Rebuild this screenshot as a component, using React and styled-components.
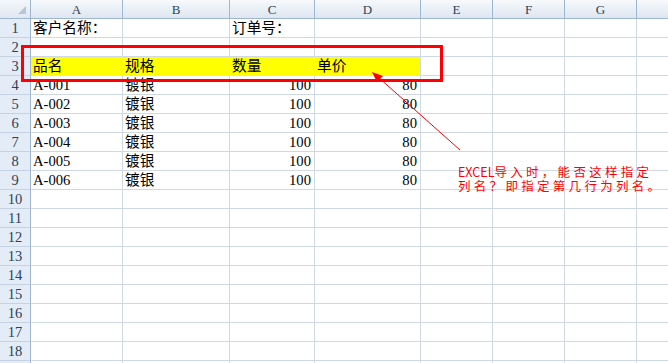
import React from "react";
import styled, { createGlobalStyle } from "styled-components";

const GlobalStyle = createGlobalStyle`
  html, body {
    margin: 0;
    padding: 0;
    background: #ffffff;
    overflow: hidden;
  }
  body {
    width: 668px;
    height: 363px;
  }
`;

const COLS = ["A", "B", "C", "D", "E", "F", "G", "H"];
const ROW_COUNT = 19;

const Page = styled.div`
  position: relative;
  width: 668px;
  height: 363px;
  overflow: hidden;
  font-family: "Liberation Serif", "Noto Sans CJK SC", serif;
`;

const Sheet = styled.div`
  display: grid;
  grid-template-columns: 31px 92px 107px 85px 106px 72px 72px 72px 72px;
  grid-template-rows: 19px;
  grid-auto-rows: 19px;
  width: max-content;
`;

const Corner = styled.div`
  position: relative;
  box-sizing: border-box;
  background: linear-gradient(#f4f7fb, #dfe7f2);
  border-right: 1px solid #9eb6ce;
  border-bottom: 1px solid #9eb6ce;

  &::after {
    content: "";
    position: absolute;
    right: 4px;
    bottom: 4px;
    width: 0;
    height: 0;
    border-left: 8px solid transparent;
    border-bottom: 8px solid #b6c6da;
  }
`;

const ColHeader = styled.div`
  box-sizing: border-box;
  display: flex;
  align-items: center;
  justify-content: center;
  background: linear-gradient(#f7f9fc, #dde6f1);
  border-right: 1px solid #9eb6ce;
  border-bottom: 1px solid #9eb6ce;
  color: #2c4254;
  font-size: 13px;
  padding-top: 1px;
`;

const RowHeader = styled.div`
  box-sizing: border-box;
  display: flex;
  align-items: center;
  justify-content: center;
  background: #e4ecf7;
  border-right: 1px solid #9eb6ce;
  border-bottom: 1px solid #c5d2e3;
  color: #2c4254;
  font-size: 14.5px;
  padding-top: 1px;
  overflow: hidden;
`;

const Cell = styled.div`
  box-sizing: border-box;
  display: flex;
  align-items: flex-end;
  justify-content: ${(p) => (p.$align === "right" ? "flex-end" : "flex-start")};
  padding: 0 3px 1px 2px;
  background: ${(p) => (p.$fill ? "#ffff00" : "transparent")};
  border-right: 1px solid ${(p) => (p.$fill && !p.$lastFill ? "#ffff00" : "#d0d7e5")};
  border-bottom: 1px solid ${(p) => (p.$fill ? "#ffff00" : "#d0d7e5")};
  color: #000000;
  font-size: 14.67px;
  line-height: 1;
  white-space: nowrap;
  overflow: hidden;
`;

const Highlight = styled.div`
  position: absolute;
  left: 21px;
  top: 45px;
  width: 422px;
  height: 37px;
  box-sizing: border-box;
  border: 3px solid #ff0000;
  pointer-events: none;
`;

const Arrow = styled.svg`
  position: absolute;
  left: 0;
  top: 0;
  pointer-events: none;
`;

const Note = styled.div`
  position: absolute;
  left: 458px;
  top: 165px;
  color: #ff0000;
  font-family: "Noto Sans CJK SC", sans-serif;
  font-size: 12.5px;
  line-height: 13.5px;
  letter-spacing: 3.3px;
  white-space: nowrap;
`;

const Latin = styled.span`
  letter-spacing: 0;
`;

const items = ["A-001", "A-002", "A-003", "A-004", "A-005", "A-006"];

function rowData(r) {
  if (r === 1) return { A: "客户名称：", C: "订单号：" };
  if (r === 3) return { A: "品名", B: "规格", C: "数量", D: "单价", fill: true };
  if (r >= 4 && r <= 9) return { A: items[r - 4], B: "镀银", C: "100", D: "80", nums: true };
  return {};
}

export default function App() {
  const rows = [];
  for (let r = 1; r <= ROW_COUNT; r++) {
    const d = rowData(r);
    rows.push(<RowHeader key={`h${r}`}>{r}</RowHeader>);
    COLS.forEach((c, i) => {
      const fill = d.fill && i < 4;
      const right = d.nums && (c === "C" || c === "D");
      rows.push(
        <Cell key={`${c}${r}`} $fill={fill} $lastFill={fill && c === "D"} $align={right ? "right" : "left"}>
          {d[c] || ""}
        </Cell>
      );
    });
  }

  return (
    <>
      <GlobalStyle />
      <Page>
        <Sheet>
          <Corner />
          {COLS.map((c) => (
            <ColHeader key={c}>{c}</ColHeader>
          ))}
          {rows}
        </Sheet>
        <Highlight />
        <Arrow width="668" height="363" viewBox="0 0 668 363">
          <line x1="460" y1="150" x2="378" y2="77" stroke="#ff0000" strokeWidth="1" />
          <polygon points="372,72 383,76 377,82" fill="#ff0000" />
        </Arrow>
        <Note>
          <Latin>EXCEL</Latin>导入时，能否这样指定
          <br />
          列名？即指定第几行为列名。
        </Note>
      </Page>
    </>
  );
}
